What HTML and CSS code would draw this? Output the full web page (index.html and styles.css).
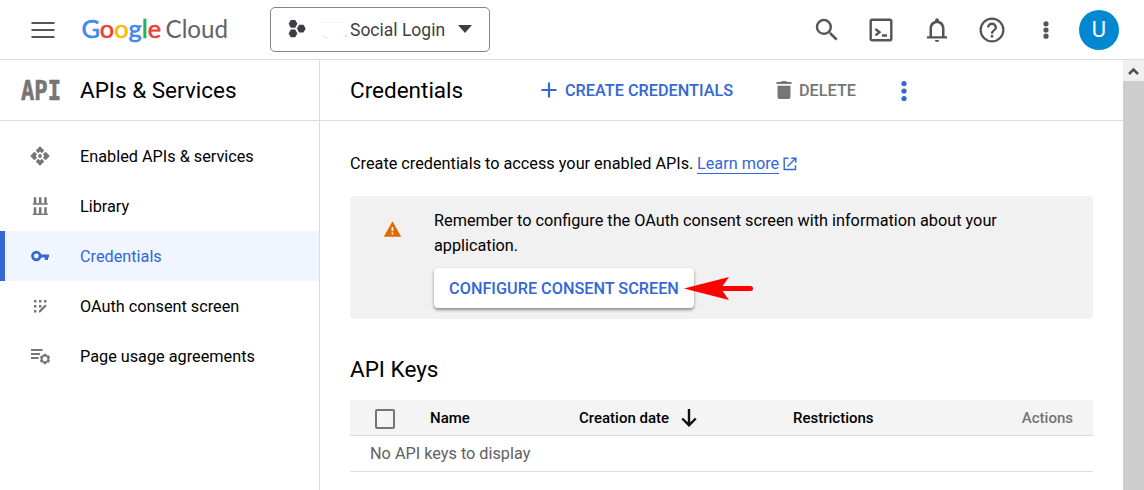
FILE: index.html
```html
<!DOCTYPE html>
<html lang="en">
<head>
<meta charset="utf-8">
<title>Credentials – APIs &amp; Services</title>
<link rel="stylesheet" href="styles.css">
</head>
<body>
<header class="topbar">
  <svg class="menu" width="24" height="18" viewBox="0 0 24 18"><path d="M.5 2h23M.5 9h23M.5 16h23" stroke="#555" stroke-width="2.200"/></svg>
  <svg class="brand" width="148" height="36" viewBox="0 0 148 36">
    <text class="brand-google" x="-.5" y="26" textLength="79.500" lengthAdjust="spacingAndGlyphs"><tspan class="blue">G</tspan><tspan class="red">o</tspan><tspan class="yellow">o</tspan><tspan class="blue">g</tspan><tspan class="green">l</tspan><tspan class="red">e</tspan></text>
    <text class="brand-cloud" x="83.500" y="26" textLength="62.500" lengthAdjust="spacingAndGlyphs">Cloud</text>
  </svg>
  <button class="project">
    <svg class="hexes" width="17" height="20" viewBox="0 0 17 20" fill="#3c4043"><path d="M2.800 1h4.400l2.200 3.800-2.200 3.900H2.800L.6 4.800z"/><path d="M11.100 5.700h4.400l2.200 3.900-2.200 3.800h-4.400l-2.200-3.800z"/><path d="M2.800 10.600h4.400l2.200 3.900-2.200 3.800H2.800L.6 14.500z"/></svg>
    <svg class="smudge" width="30" height="20" viewBox="0 0 30 20"><path d="M1 1.500h27" stroke="#f3f3f3" stroke-dasharray="2 1"/><path d="M4 15l5 2.500" stroke="#ccc" stroke-width=".8" stroke-dasharray="2 1.500"/><path d="M26 15h2" stroke="#bbb"/></svg>
    <span class="project-name">Social Login</span>
    <svg class="caret" width="14" height="8" viewBox="0 0 14 8"><path d="M0 0h14L7 8z" fill="#3c4043"/></svg>
  </button>
  <div class="tools">
    <svg width="30" height="30" viewBox="0 0 24 24" fill="#555"><path d="M15.500 14h-.79l-.28-.27A6.470 6.470 0 0 0 16 9.500 6.500 6.500 0 1 0 9.500 16c1.610 0 3.090-.59 4.230-1.570l.27.28v.79l5 4.990L20.490 19l-4.990-5zm-6 0C7.010 14 5 11.990 5 9.500S7.010 5 9.500 5 14 7.010 14 9.500 11.990 14 9.500 14z"/></svg>
    <svg width="24" height="24" viewBox="0 0 24 24" fill="none" stroke="#555" stroke-width="2.400"><rect x="1.700" y="1.700" width="20.600" height="20.600" rx="1.500"/><path d="M6.500 11l4 3.200-4 3.200M13 17.500h5"/></svg>
    <svg width="30" height="30" viewBox="0 0 24 24" fill="#555"><path d="M18 17v-6c0-3.070-1.630-5.640-4.500-6.320V4a1.500 1.500 0 0 0-3 0v.68C7.640 5.360 6 7.920 6 11v6H4v1.700h16V17zm-2 0H8v-6c0-2.480 1.510-4.500 4-4.500s4 2.020 4 4.500zM10.300 20h3.400a1.700 1.700 0 0 1-3.400 0z"/></svg>
    <svg width="30" height="30" viewBox="0 0 24 24" fill="#555"><path d="M11 18h2v-2h-2v2zm1-16a10 10 0 1 0 0 20 10 10 0 0 0 0-20zm0 18.200a8.200 8.200 0 1 1 0-16.400 8.200 8.200 0 0 1 0 16.400zM12 6a4 4 0 0 0-4 4h1.900a2.100 2.100 0 1 1 4.200 0c0 2-3 1.750-3 5h1.900c0-2.250 3-2.500 3-5a4 4 0 0 0-4-4z"/></svg>
    <svg width="6" height="20" viewBox="0 0 6 20" fill="#555"><circle cx="3" cy="3.800" r="2.600"/><circle cx="3" cy="10" r="2.600"/><circle cx="3" cy="16.200" r="2.600"/></svg>
    <span class="avatar">U</span>
  </div>
</header>
<div class="body">
  <aside class="sidebar">
    <div class="side-head">
      <svg class="api" width="40" height="32" viewBox="0 0 40 32"><text x="0" y="26" textLength="40" lengthAdjust="spacingAndGlyphs">API</text></svg>
      <h2>APIs &amp; Services</h2>
    </div>
    <nav class="nav">
      <a class="item"><svg width="20" height="20" viewBox="0 0 20 20" fill="#757575"><path d="M10 .2l4.300 4.200-2.500 2.800L10 5.600 8.200 7.200 5.700 4.400z"/><path d="M19.800 10l-4.200 4.300-2.800-2.500 1.600-1.800-1.600-1.800 2.800-2.500z"/><path d="M10 19.800l-4.300-4.200 2.500-2.800 1.800 1.600 1.800-1.600 2.500 2.800z"/><path d="M.2 10l4.200-4.300 2.800 2.500L5.600 10l1.600 1.800-2.800 2.500z"/><circle cx="10" cy="10" r="1.900"/></svg><span>Enabled APIs &amp; services</span></a>
      <a class="item"><svg width="20" height="20" viewBox="0 0 20 20" fill="none" stroke="#757575"><path d="M5 1.200v6.500M10.200 1.200v6.500M15.500 1.200v6.500M5 11.200v6.500M10.200 11.200v6.500M15.500 11.200v6.500" stroke-width="2.500"/><path d="M2.800 8h15M2.800 18.300h15" stroke-width="1.400"/></svg><span>Library</span></a>
      <a class="item active"><svg width="20" height="20" viewBox="0 0 20 20"><circle cx="6.300" cy="10" r="3.800" fill="none" stroke="#3367d6" stroke-width="2.700"/><path d="M10 8.600h9v3h-1v2.500h-3.200v-2.500H10z" fill="#3367d6"/></svg><span>Credentials</span></a>
      <a class="item"><svg width="20" height="20" viewBox="0 0 20 20" fill="#757575"><path d="M4 4h2.400v2.400H4zM9 4h2.400v2.400H9zM14 4h2.400v2.400H14zM4 9h2.400v2.400H4zM9 9h2.400v2.400H9zM4 14h2.400v2.400H4zM9 14.600l6.200-6.200 1.500 1.500-6.500 6.500H9z"/></svg><span>OAuth consent screen</span></a>
      <a class="item"><svg class="gear" width="20" height="20" viewBox="0 0 20 20" fill="none" stroke="#757575"><path d="M1 4h11.500M1 8h9M1 12h7.500" stroke-width="1.800"/><circle cx="15" cy="13" r="3.400" stroke-width="2"/><path d="M15 7.800v2M15 16.200v2M10.500 10.400l1.700 1M17.800 14.600l1.700 1M10.500 15.600l1.700-1M17.800 11.400l1.700-1" stroke-width="2.600"/></svg><span>Page usage agreements</span></a>
    </nav>
  </aside>
  <main class="main">
    <div class="main-head">
      <h1>Credentials</h1>
      <button class="action create"><svg width="16" height="16" viewBox="0 0 16 16"><path d="M8 .5v15M.5 8h15" stroke="#3367d6" stroke-width="2.200"/></svg><span>CREATE CREDENTIALS</span></button>
      <button class="action delete"><svg width="16" height="18" viewBox="0 0 16 18" fill="#757575"><path d="M.5 1h4.300l1-1h4.400l1 1h4.300v2H.5zM1.500 4.800h13V16a2 2 0 0 1-2 2h-9a2 2 0 0 1-2-2z"/></svg><span>DELETE</span></button>
      <svg class="more" width="6" height="22" viewBox="0 0 6 22" fill="#3367d6"><circle cx="3" cy="3.500" r="2.600"/><circle cx="3" cy="11" r="2.600"/><circle cx="3" cy="18.500" r="2.600"/></svg>
    </div>
    <div class="content">
      <p class="intro">Create credentials to access your enabled APIs. <a class="learn">Learn more</a><svg class="external" width="14" height="14" viewBox="0 0 14 14" fill="none" stroke="#3367d6" stroke-width="1.400"><path d="M5.500 1.200H1.200v11.300h11.300V8.300M8.300 1.200h4.500v4.500M12.500 1.500L4.500 9.500"/></svg></p>
      <section class="notice">
        <svg class="warn" width="18" height="16" viewBox="0 0 18 16"><path d="M8.500 .3L17.200 15.700H-.2z" fill="#dd6b00"/><path d="M8.500 6v4.200M8.500 11.500v2" stroke="#f1f1f1" stroke-width="1.800"/></svg>
        <div class="notice-body">
          <p>Remember to configure the OAuth consent screen with information about your application.</p>
          <button class="configure">CONFIGURE CONSENT SCREEN</button>
          <svg class="arrow" width="70" height="24" viewBox="0 0 70 24"><path d="M0 12.500L45 1l-6.500 9H66.500a2.500 2.500 0 0 1 0 5H38.500l6.500 9z" fill="#f00"/></svg>
        </div>
      </section>
      <h3>API Keys</h3>
      <div class="table">
        <div class="thead">
          <span class="check"></span>
          <span>Name</span>
          <span class="sorted">Creation date<svg width="16" height="18" viewBox="0 0 16 18" fill="none" stroke="#111" stroke-width="2.400"><path d="M8 0v16M1.200 9.500L8 16.200l6.800-6.700"/></svg></span>
          <span>Restrictions</span>
          <span class="actions">Actions</span>
        </div>
        <div class="empty">No API keys to display</div>
      </div>
    </div>
  </main>
  <div class="scrollbar">
    <div class="scroll-up"><svg width="11" height="8" viewBox="0 0 11 8"><path d="M1 7l4.500-4.500L10 7" fill="none" stroke="#505050" stroke-width="2.500"/></svg></div>
  </div>
</div>
</body>
</html>
```
FILE: styles.css
```css
* { box-sizing: border-box; }
body { margin: 0; width: 1144px; height: 490px; overflow: hidden; background: #fff; color: #000; font: 16.25px Roboto, sans-serif; display: flex; flex-direction: column; }
h1, h2, h3, p { margin: 0; font-weight: 400; }
h1, h2, h3 { font-size: 22.5px; }
svg { display: block; flex: none; }
button { font: inherit; border: 0; background: none; padding: 0; display: flex; align-items: center; white-space: nowrap; }

.topbar { height: 60px; flex: none; border-bottom: 1px solid #dadce0; display: flex; align-items: center; padding: 0 25px 0 31px; }
.menu { margin-top: 1px; }
.brand { margin-left: 27px; overflow: visible; }
.brand text { font-family: Lato, sans-serif; font-size: 25.5px; }
.brand-google { stroke-width: .6; }
.blue { fill: #4285f4; stroke: #4285f4; }
.red { fill: #ea4335; stroke: #ea4335; }
.yellow { fill: #fbbc04; stroke: #fbbc04; }
.green { fill: #34a853; stroke: #34a853; }
.brand-cloud { fill: #5f6368; }
.project { width: 220px; height: 45px; margin-left: 40px; border: 1px solid #80868b; border-radius: 5px; padding-left: 17px; color: #3c4043; font-size: 17.5px; }
.hexes { margin-top: -2px; overflow: visible; }
.smudge { margin: 2px 0 0 14px; }
.project-name { margin-left: 1px; width: 108px; text-align: left; }
.caret { margin-top: -2px; }
.tools { margin-left: auto; display: flex; align-items: center; height: 60px; }
.tools svg:nth-child(2) { margin-left: 27px; }
.tools svg:nth-child(3) { margin-left: 29px; }
.tools svg:nth-child(4) { margin-left: 25px; }
.tools svg:nth-child(5) { margin-left: 36px; }
.avatar { width: 40px; height: 40px; margin-left: 30px; border-radius: 50%; background: #0288d1; color: #fff; font-size: 22px; display: flex; align-items: center; justify-content: center; }

.body { flex: 1; display: flex; min-height: 0; }
.sidebar { width: 320px; border-right: 1px solid #dadce0; }
.side-head { height: 61px; border-bottom: 1px solid #dadce0; display: flex; align-items: center; padding-left: 21px; gap: 19px; }
.api { overflow: visible; }
.api text { font: 700 26.5px "DejaVu Sans Mono", monospace; fill: #757575; stroke: #757575; stroke-width: .6; }
.nav { padding-top: 10px; }
.item { height: 50px; display: flex; align-items: center; padding-left: 30px; gap: 30px; }
.item.active { background: #f0f5ff; border-left: 5px solid #3367d6; padding-left: 25px; color: #3367d6; }
.gear { overflow: visible; }

.main { flex: 1; }
.main-head { height: 61px; border-bottom: 1px solid #dadce0; display: flex; align-items: center; padding-left: 30px; }
.main-head h1 { width: 191px; }
.action { font-weight: 500; }
.create { color: #3367d6; gap: 8px; width: 235px; }
.delete { color: #757575; gap: 7px; width: 125px; }
.more { margin-top: 2px; }
.content { padding: 30px 30px 0; }
.intro { height: 25px; line-height: 25px; display: flex; align-items: center; white-space: pre; }
.learn { color: #3367d6; border-bottom: 1px solid #3367d6; line-height: 19px; margin: 1px 0 0 -.5px; }
.external { margin-left: 4px; }
.notice { height: 123px; margin-top: 20px; padding: 12px 70px 0 34px; background: #f1f1f1; border-radius: 4px; display: flex; }
.warn { margin-top: 13px; overflow: visible; }
.notice-body { margin-left: 32px; position: relative; line-height: 25px; }
.configure { width: 260px; height: 40px; margin-top: 10px; border-radius: 4px; background: #fff; color: #3367d6; font-weight: 500; justify-content: center; box-shadow: 0 2px 3px rgba(0,0,0,.35), 0 1px 4px rgba(0,0,0,.12); }
.arrow { position: absolute; left: 250px; top: 68px; }
.content h3 { margin-top: 35px; height: 30px; line-height: 30px; }
.table { margin-top: 16px; }
.thead { height: 36px; background: #f4f4f4; border-bottom: 1px solid #dadce0; display: grid; grid-template-columns: 55px 149px 214px 1fr auto; align-items: center; padding: 0 20px 0 25px; font-weight: 500; font-size: 15px; }
.check { width: 20px; height: 20px; margin-top: 2px; border: 2px solid #757575; border-radius: 2px; }
.sorted { display: flex; align-items: center; gap: 12px; }
.actions { color: #757575; }
.empty { height: 36px; line-height: 36px; padding-left: 20px; color: #616161; border-bottom: 1px solid #dadce0; }
.scrollbar { width: 21px; background: #cdcdcd; }
.scroll-up { height: 21px; background: #f0f0f0; display: flex; align-items: center; justify-content: center; }
```
